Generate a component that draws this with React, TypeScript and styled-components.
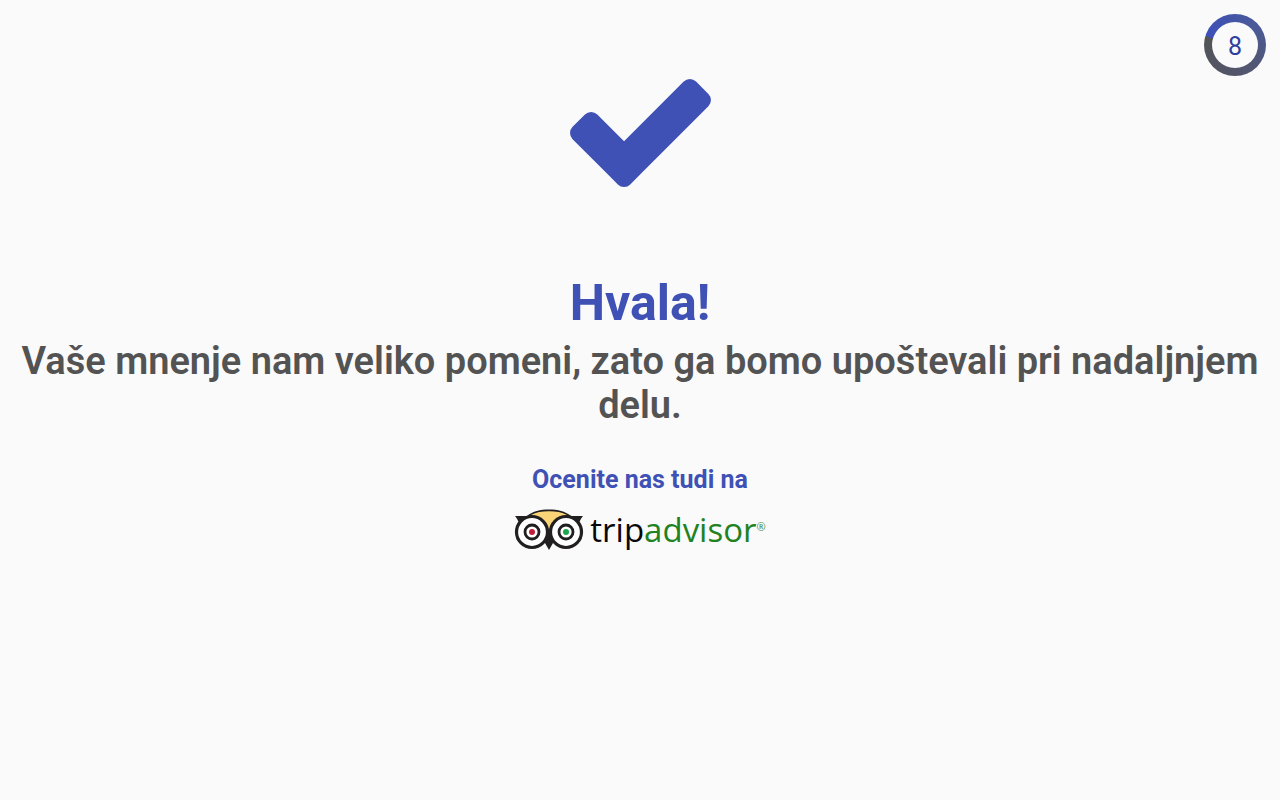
import React from 'react';
import styled, { createGlobalStyle } from 'styled-components';

const GlobalStyle = createGlobalStyle`
  * { box-sizing: border-box; }
  body {
    margin: 0;
    background: #fafafa;
    font-family: Roboto, "Liberation Sans", sans-serif;
  }
`;

const Page = styled.main`
  position: relative;
  display: flex;
  flex-direction: column;
  align-items: center;
  min-height: 100vh;
  padding: 79px 16px 24px;
  text-align: center;
`;

const Countdown = styled.div`
  position: absolute;
  top: 14px;
  right: 14px;
  width: 62px;
  height: 62px;
  padding: 8px;
  border-radius: 50%;
  background: conic-gradient(from 287deg, #3d50ba, #4a5a96 35%, #525672 60%, #535456);
`;

const CountdownValue = styled.span`
  display: flex;
  align-items: center;
  justify-content: center;
  height: 100%;
  padding-top: 4px;
  border-radius: 50%;
  background: #fafafa;
  color: #303f9f;
  font-size: 25px;
  line-height: 30px;
`;

const CheckMark = styled.svg`
  width: 141px;
  height: 108px;
  fill: #3f51b5;
`;

const Title = styled.h1`
  margin: 86px 0 0;
  color: #3f51b5;
  font-size: 50px;
  font-weight: 700;
  line-height: 60px;
`;

const Message = styled.p`
  margin: 6px 0 0;
  color: #535353;
  font-size: 38px;
  font-weight: 600;
  line-height: 44px;
`;

const ReviewPrompt = styled.h2`
  margin: 38px 0 0;
  color: #3f51b5;
  font-size: 25px;
  font-weight: 700;
  line-height: 30px;
`;

const ReviewLink = styled.a`
  display: flex;
  align-items: center;
  gap: 6px;
  margin-top: 14px;
  color: #080808;
  text-decoration: none;
`;

const Owl = styled.svg`
  width: 70px;
  height: 42px;
`;

const Wordmark = styled.span`
  display: flex;
  font-family: "Open Sans", "Noto Sans", sans-serif;
  font-size: 33px;
  line-height: 40px;
`;

const WordmarkAccent = styled.span`
  color: #218221;
`;

const Registered = styled.span`
  color: #3f8a42;
  font-size: 11px;
  line-height: 34px;
`;

export default function App() {
  return (
    <>
      <GlobalStyle />
      <Page>
        <Countdown role="timer">
          <CountdownValue>8</CountdownValue>
        </Countdown>
        <CheckMark viewBox="121 334 1550 1188" aria-hidden="true">
          <path d="M1671 566q0 40-28 68l-724 724-136 136q-28 28-68 28t-68-28l-136-136-362-362q-28-28-28-68t28-68l136-136q28-28 68-28t68 28l294 295 656-657q28-28 68-28t68 28l136 136q28 28 28 68z" />
        </CheckMark>
        <Title>Hvala!</Title>
        <Message>Vaše mnenje nam veliko pomeni, zato ga bomo upoštevali pri nadaljnjem delu.</Message>
        <ReviewPrompt>Ocenite nas tudi na</ReviewPrompt>
        <ReviewLink href="#tripadvisor">
          <Owl viewBox="0 0 70 42" aria-hidden="true">
            <path d="M1 7H13C19 2 26 0.500 35 0.500S51 2 57 7H69C67 9 66 12 65 14L52 24 39 34 35 41 31 34 18 24 5 14C4 12 3 9 1 7Z" fill="#211f20" />
            <path d="M17 6C22 3 28 2.200 35 2.200S48 3 53 6C44 8 37 14 35 22 33 14 26 8 17 6Z" fill="#fcd478" />
            <circle cx="18" cy="23" r="15.500" fill="#fff" stroke="#211f20" strokeWidth="3.200" />
            <circle cx="52" cy="23" r="15.500" fill="#fff" stroke="#211f20" strokeWidth="3.200" />
            <circle cx="18" cy="23" r="7" fill="#fff" stroke="#211f20" strokeWidth="2.800" />
            <circle cx="52" cy="23" r="7" fill="#fff" stroke="#211f20" strokeWidth="2.800" />
            <circle cx="18" cy="23" r="3" fill="#c11f38" />
            <circle cx="52" cy="23" r="3" fill="#18a94c" />
          </Owl>
          <Wordmark>
            trip<WordmarkAccent>advisor</WordmarkAccent>
            <Registered>®</Registered>
          </Wordmark>
        </ReviewLink>
      </Page>
    </>
  );
}
